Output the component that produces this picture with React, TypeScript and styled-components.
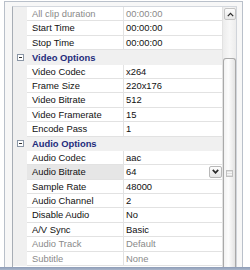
import React from "react";
import styled, { createGlobalStyle } from "styled-components";

const GlobalStyle = createGlobalStyle`
  html, body { margin: 0; padding: 0; background: #ffffff; }
  body { font-family: "Liberation Sans", Arial, sans-serif; }
  * { box-sizing: border-box; }
`;

const Page = styled.div`
  width: 250px;
  height: 270px;
  overflow: hidden;
  display: flex;
  flex-direction: column;
  background: #ffffff;
`;

const Panel = styled.div`
  margin: 1px 0 0 4px;
  width: 239px;
  height: 266px;
  border: 1px solid #b9c0ca;
  border-bottom: none;
  background: #f7f7f7;
  padding: 4px 5px 0 7px;
  display: flex;
`;

const BottomStrip = styled.div`
  height: 3px;
  background: linear-gradient(#8d9cb6, #a9b6cb);
`;

const Grid = styled.div`
  flex: 1;
  display: flex;
  border-left: 1px solid #a7adb5;
  border-top: 1px solid #d4d8de;
  background: #ffffff;
  overflow: hidden;
`;

const Table = styled.div`
  flex: 1;
  display: flex;
  flex-direction: column;
`;

const Row = styled.div<{ $category?: boolean }>`
  flex: 0 0 14.4px;
  height: 14.4px;
  display: grid;
  grid-template-columns: 14px 97px 1fr;
  background: ${(p) => (p.$category ? "#f0f0f0" : "#ffffff")};
`;

const Gutter = styled.div`
  background: #f0f0f0;
  display: flex;
  align-items: center;
  justify-content: center;
`;

const Cell = styled.div<{ $muted?: boolean; $selected?: boolean; $value?: boolean }>`
  display: flex;
  align-items: center;
  font-size: 9.4px;
  line-height: 13.4px;
  white-space: nowrap;
  overflow: hidden;
  color: ${(p) => (p.$muted ? "#8a8a8a" : "#111111")};
  background: ${(p) => (p.$selected ? "#e6e6e6" : "#ffffff")};
  border-bottom: 1px solid #e2e2e2;
  border-right: ${(p) => (p.$value ? "none" : "1px solid #e2e2e2")};
  padding-left: ${(p) => (p.$value ? "2px" : "5px")};
`;

const CategoryLabel = styled.div`
  grid-column: 2 / 4;
  display: flex;
  align-items: center;
  padding-left: 5px;
  font-size: 9.4px;
  font-weight: bold;
  color: #1e2c7c;
  white-space: nowrap;
`;

const Toggle = styled.div`
  width: 7px;
  height: 7px;
  border: 1px solid #8a96a6;
  background: #ffffff;
  display: flex;
  align-items: center;
  justify-content: center;
  &::after {
    content: "";
    width: 3px;
    height: 1px;
    background: #303030;
  }
`;

const DropButton = styled.div`
  margin-left: auto;
  width: 13px;
  height: 12px;
  border: 1px solid #b8b8b8;
  border-radius: 2px;
  background: linear-gradient(#fdfdfd, #e6e6e6);
  display: flex;
  align-items: center;
  justify-content: center;
`;

const ScrollBar = styled.div`
  width: 15px;
  display: flex;
  flex-direction: column;
  background: linear-gradient(90deg, #ececec, #f7f7f7 50%, #ececec);
  border-left: 1px solid #e2e2e2;
  border-right: 1px solid #d0d4da;
`;

const ScrollButton = styled.div`
  margin: 1px 0 0 1px;
  width: 12px;
  height: 12px;
  border: 1px solid #c4c4c4;
  border-radius: 2px;
  background: linear-gradient(#fcfcfc, #e7e7e7);
  display: flex;
  align-items: center;
  justify-content: center;
`;

const Track = styled.div`
  flex: 0 0 38px;
`;

const Thumb = styled.div`
  flex: 1;
  width: 13px;
  border: 1px solid #a9a9a9;
  border-bottom: none;
  border-radius: 3px 3px 0 0;
  background: linear-gradient(90deg, #f2f2f2, #fdfdfd 40%, #e3e3e3);
  padding-top: 111px;
  display: flex;
  justify-content: center;
`;

const Grip = styled.div`
  width: 7px;
  height: 7px;
  border: 1px solid #c0c0c0;
  background: repeating-linear-gradient(#e0e0e0 0 1px, #f6f6f6 1px 2px);
`;

type Item =
  | { kind: "cat"; label: string }
  | { kind: "prop"; name: string; value: string; muted?: boolean; selected?: boolean; dropdown?: boolean };

const items: Item[] = [
  { kind: "prop", name: "All clip duration", value: "00:00:00", muted: true },
  { kind: "prop", name: "Start Time", value: "00:00:00" },
  { kind: "prop", name: "Stop Time", value: "00:00:00" },
  { kind: "cat", label: "Video Options" },
  { kind: "prop", name: "Video Codec", value: "x264" },
  { kind: "prop", name: "Frame Size", value: "220x176" },
  { kind: "prop", name: "Video Bitrate", value: "512" },
  { kind: "prop", name: "Video Framerate", value: "15" },
  { kind: "prop", name: "Encode Pass", value: "1" },
  { kind: "cat", label: "Audio Options" },
  { kind: "prop", name: "Audio Codec", value: "aac" },
  { kind: "prop", name: "Audio Bitrate", value: "64", selected: true, dropdown: true },
  { kind: "prop", name: "Sample Rate", value: "48000" },
  { kind: "prop", name: "Audio Channel", value: "2" },
  { kind: "prop", name: "Disable Audio", value: "No" },
  { kind: "prop", name: "A/V Sync", value: "Basic" },
  { kind: "prop", name: "Audio Track", value: "Default", muted: true },
  { kind: "prop", name: "Subtitle", value: "None", muted: true },
];

const Chevron = ({ up }: { up?: boolean }) => (
  <svg width="7" height="5" viewBox="0 0 7 5">
    <path
      d={up ? "M0.8 4.2 L3.5 1.3 L6.2 4.2" : "M0.8 0.9 L3.5 3.8 L6.2 0.9"}
      fill="none"
      stroke="#2a2a2a"
      strokeWidth={up ? 1.2 : 1.7}
    />
  </svg>
);

export default function App() {
  return (
    <>
      <GlobalStyle />
      <Page>
        <Panel>
          <Grid>
            <Table>
              {items.map((it, i) =>
                it.kind === "cat" ? (
                  <Row key={i} $category>
                    <Gutter>
                      <Toggle />
                    </Gutter>
                    <CategoryLabel>{it.label}</CategoryLabel>
                  </Row>
                ) : (
                  <Row key={i}>
                    <Gutter />
                    <Cell $muted={it.muted} $selected={it.selected}>
                      {it.name}
                    </Cell>
                    <Cell $muted={it.muted} $value>
                      {it.value}
                      {it.dropdown && (
                        <DropButton>
                          <Chevron />
                        </DropButton>
                      )}
                    </Cell>
                  </Row>
                )
              )}
            </Table>
            <ScrollBar>
              <ScrollButton>
                <Chevron up />
              </ScrollButton>
              <Track />
              <Thumb>
                <Grip />
              </Thumb>
            </ScrollBar>
          </Grid>
        </Panel>
        <BottomStrip />
      </Page>
    </>
  );
}
